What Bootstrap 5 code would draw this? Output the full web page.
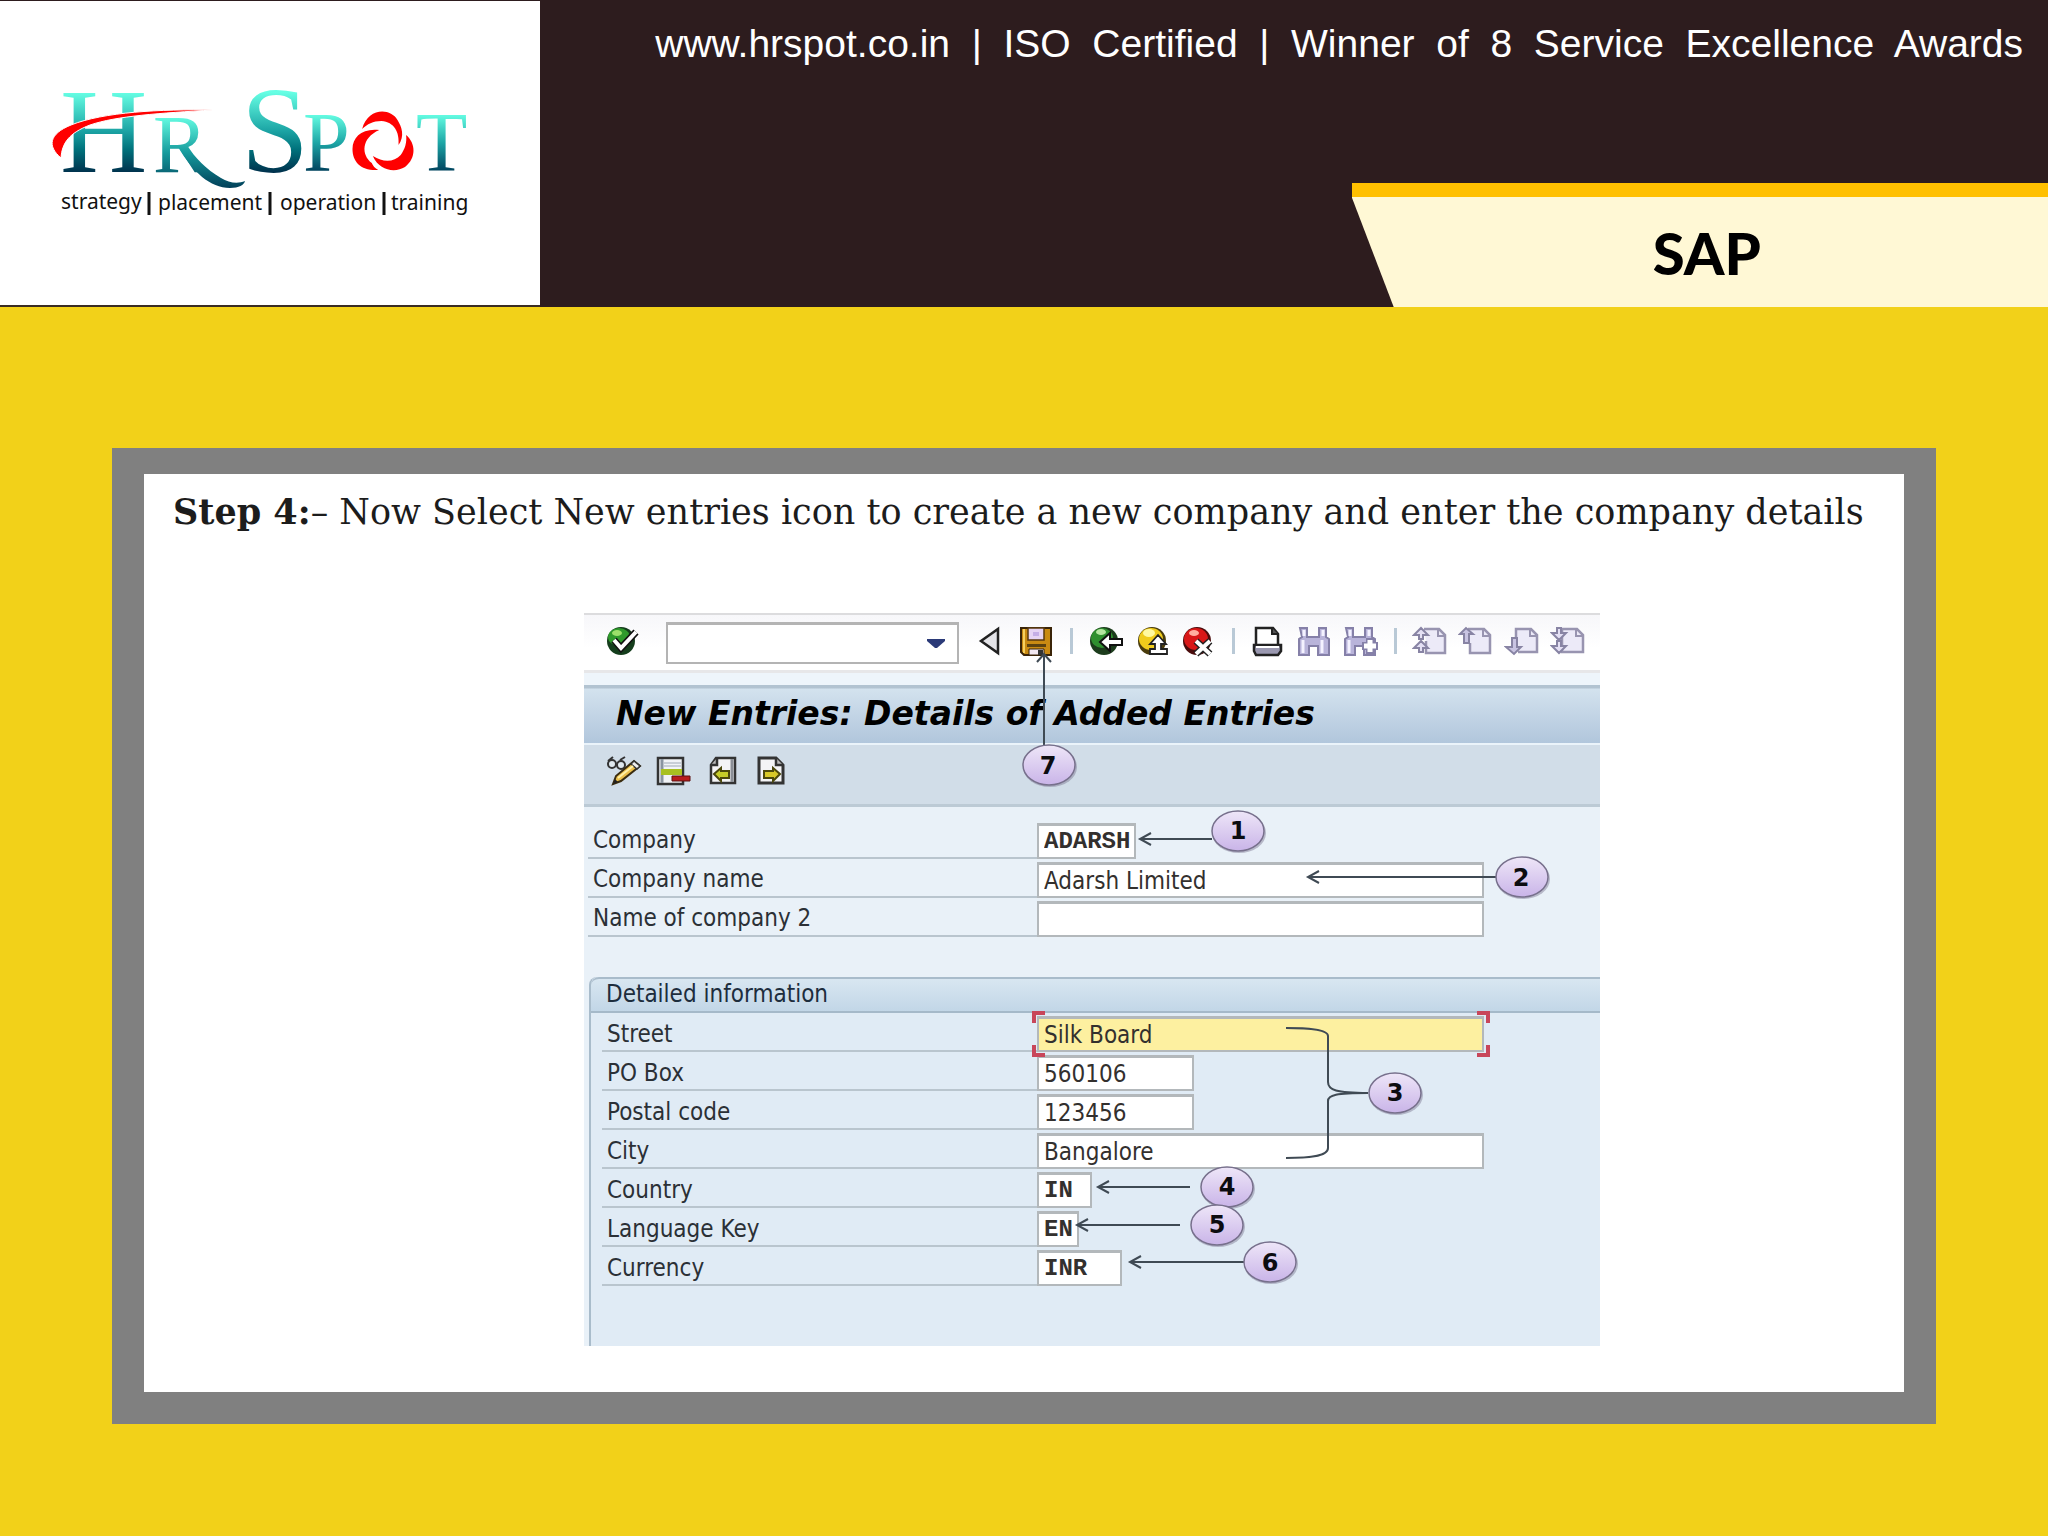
<!DOCTYPE html>
<html lang="en">
<head>
<meta charset="utf-8">
<meta name="viewport" content="width=device-width, initial-scale=1">
<title>HR Spot - SAP</title>
<link href="https://cdn.jsdelivr.net/npm/bootstrap@5.3.0/dist/css/bootstrap.min.css" rel="stylesheet">
<style>
body{background:#f2d119;color:#000;font-family:"Liberation Sans",Arial,sans-serif}
.site-head{background:#2d1c1e;min-height:307px}
.brand-box{flex:0 0 540px;background:#fff;border-top:1px solid #2d1c1e;border-bottom:2px solid #3a2c22}
.tagline{color:#fff;font-size:39px;line-height:48px;white-space:pre-wrap;padding:20px 25px 0 0}
.ribbon{width:34vw;height:124px;background:#fff8d5;border-top:14px solid #ffc000;clip-path:polygon(0 0,100% 0,100% 100%,42px 100%,0 14px)}
.ribbon h2{font:900 58px/112px Lato,Carlito,sans-serif;margin:0;padding-left:14px}
.stage{padding:141px 112px 112px}
.slide-frame{background:#fff;border:32px solid #808080;border-top-width:26px;padding:14px 29px 46px}
.step-title{font:400 35px/48px Georgia,"DejaVu Serif",serif;color:#1c1c1c;margin-bottom:77px}
.sap-wrap{padding-left:411px}
.sap-win{position:relative;width:1016px;font-family:Tahoma,"DejaVu Sans Condensed","DejaVu Sans",sans-serif;background:#e9f1f8}
.tool-row{height:60px;gap:10px;padding-left:20px;background:linear-gradient(#f7f7fa,#fff 60%);border-top:2px solid #dcdcde;border-bottom:3px solid #e7e7e9}
.ico-btn{width:36px;height:32px;padding:0;border:0;background:none;flex:none;display:block}
.ico-btn svg{display:block}
.tool-row .ico-btn,.tool-sep{margin-bottom:4px}
.tool-sep{width:14px;height:26px;flex:none;display:flex;justify-content:center}
.tool-sep::before{content:"";width:3px;background:#b9c9d6}
.cmd-box{position:relative;width:296px;flex:none}
.cmd-box select{appearance:none;width:293px;height:42px;border:2px solid #b4b4b4;border-top-width:3px;background:#fff;display:block}
.cmd-box svg{position:absolute;right:17px;top:17px;pointer-events:none}
.title-row{border-top:12px solid #eef5fb;background:linear-gradient(#b2c3d1 0 3px,#d3e2ee 4px,#b1c6dc);height:72px;border-bottom:2px solid #eaf3fa}
.title-row h3{font:italic 700 33px/58px Verdana,"DejaVu Sans",sans-serif;margin:0;padding-left:32px}
.btn-row{height:62px;gap:13px;padding:10px 0 0 22px;background:#d1dde8;border-bottom:3px solid #bccad5}
.form-main{padding:13px 0 0 4px}
.f-row{height:39px}
.f-row label{flex:0 0 449px;height:39px;line-height:41px;font-size:24px;padding-left:5px;color:#2b3036;border-bottom:2px solid #b9c5ce}
.f-group .f-row label{flex-basis:435px;line-height:43px}
.f-row input{height:36px;border:2px solid #b3b8bb;border-top-width:3px;background:#fff;padding:0 0 0 5px;font-size:24px;color:#33302e;border-radius:0}
.f-row input.code{font:700 24px "Liberation Mono",monospace}
.w-xl{width:447px}.w-md{width:157px}.w-co{width:99px}.w-in{width:55px}.w-en{width:42px}.w-cur{width:85px}
.f-group{margin:40px 0 0 1px;border-left:2px solid #a9bccb;border-top-left-radius:8px;background:#e0ebf5;padding:0 0 60px 11px}
.f-legend{margin-left:-11px;height:36px;padding-left:15px;font-size:24px;line-height:30px;color:#1d2d3d;background:linear-gradient(#d8e6f1,#c2d6e7);border-top:2px solid #a9bccb;border-bottom:2px solid #a5b9c9;border-top-left-radius:8px}
.focus-box{position:relative}
.focus-box input{background:#fdf0a0}
.focus-box svg{position:absolute;left:-5px;top:-5px;pointer-events:none}
.notes{position:absolute;left:0;top:0;pointer-events:none}
</style>
</head>
<body>
<header class="site-head d-flex">
  <div class="brand-box">
    <svg width="540" height="304" viewBox="0 1 540 304" role="img" aria-label="HR Spot">
      <defs>
        <linearGradient id="gBig" gradientUnits="userSpaceOnUse" x1="0" y1="88" x2="0" y2="173"><stop offset="0.05" stop-color="#66ffe4"/><stop offset=".5" stop-color="#1ca5a5"/><stop offset=".72" stop-color="#00727c"/><stop offset="1" stop-color="#00304c"/></linearGradient>
        <linearGradient id="gSm" gradientUnits="userSpaceOnUse" x1="0" y1="114" x2="0" y2="172"><stop offset="0" stop-color="#66ffe4"/><stop offset=".5" stop-color="#1ca5a5"/><stop offset="1" stop-color="#00405c"/></linearGradient>
        <linearGradient id="gR" gradientUnits="userSpaceOnUse" x1="0" y1="116" x2="0" y2="190"><stop offset="0" stop-color="#66ffe4"/><stop offset=".5" stop-color="#159a9c"/><stop offset="1" stop-color="#003a55"/></linearGradient>
      </defs>
      <g font-family="'Liberation Serif',serif">
        <text x="60" y="172" font-size="121" fill="url(#gBig)">H</text>
        <text x="153" y="172" font-size="82" fill="url(#gR)">R</text>
        <text x="241" y="172" font-size="122" fill="url(#gBig)">S</text>
        <text x="303" y="171" font-size="84" fill="url(#gSm)">P</text>
        <text x="416" y="171" font-size="84" fill="url(#gSm)">T</text>
      </g>
      <path d="M178 147C193 172 210 188 230 188C239 188 244 185 245 181C238 184 229 183 221 178C206 169 195 158 187 145Z" fill="url(#gR)"/>
      <path d="M61 158C47 146 49 134 71 125C103 112 161 109 213 110C161 113 116 116 90 125C69 133 62 143 61 158Z" fill="#f00" stroke="#fff" stroke-width="1"/>
      <g fill="#f00" transform="scale(1.0714 1)">
        <path d="M338 129C343 108 364 107 371 120C375 127 378 136 372 145C373 132 368 122 356 121C348 121 343 124 338 129Z"/>
        <path d="M354 130C338 128 329 137 329 149C329 162 337 171 353 170C350 168 348 166 347 163C337 155 337 138 354 130Z"/>
        <path d="M379 135C388 143 389 158 378 167C369 173 354 171 348 156C358 163 368 162 374 155C378 149 380 142 379 135Z"/>
      </g>
      <g font-family="'Noto Sans',sans-serif" font-size="21" fill="#111">
        <text x="61" y="209">strategy</text><text x="158" y="210">placement</text><text x="280" y="210">operation</text><text x="391" y="210">training</text>
      </g>
      <path d="M149 192V215M270 192V215M384 192V215" stroke="#111" stroke-width="3"/>
    </svg>
  </div>
  <div class="flex-grow-1 d-flex flex-column justify-content-between align-items-end">
    <div class="tagline">www.hrspot.co.in  |  ISO  Certified  |  Winner  of  8  Service  Excellence  Awards</div>
    <div class="ribbon text-center"><h2>SAP</h2></div>
  </div>
</header>

<main class="stage">
  <section class="slide-frame">
    <h1 class="step-title"><strong>Step 4:</strong>– Now Select New entries icon to create a new company and enter the company details</h1>
    <div class="sap-wrap">
    <div class="sap-win">
      <div class="tool-row d-flex align-items-center">
        <button class="ico-btn me-3" aria-label="Enter"><svg width="36" height="32" viewBox="0 0 36 32"><circle cx="17" cy="16" r="14" fill="#143d1c"/><ellipse cx="15" cy="12" rx="11" ry="9" fill="#2f9a2c"/><ellipse cx="13" cy="8" rx="5" ry="3" fill="#9be06a"/><path d="M10 15L17 23L32 7" fill="none" stroke="#111" stroke-width="7"/><path d="M10 15L17 23L32 7" fill="none" stroke="#fff" stroke-width="4"/></svg></button>
        <div class="cmd-box"><select aria-label="Command"><option></option></select><svg width="18" height="9" viewBox="0 0 18 9"><path d="M0 0H18V2L10 9H8L0 2Z" fill="#2b3a78"/></svg></div>
        <button class="ico-btn" aria-label="Collapse"><svg width="36" height="32" viewBox="0 0 36 32"><path d="M26 4V28L9 16Z" fill="#e4e4e8" stroke="#222" stroke-width="2.500"/></svg></button>
        <button class="ico-btn" aria-label="Save"><svg width="36" height="32" viewBox="0 0 36 32"><path d="M3 3H33V30H6L3 27Z" fill="#c98a12" stroke="#3a2408" stroke-width="2"/><path d="M6 4V28" stroke="#f6d060" stroke-width="2"/><path d="M10 3H26V15H10Z" fill="#e6d4f4" stroke="#5a3a10" stroke-width="1.500"/><path d="M15 7H21V11H15Z" fill="#c5aee6"/><path d="M9 19H28V22H9Z" fill="#5c4210"/><path d="M11 24H26V30H11Z" fill="#f2e8f2" stroke="#3a2408"/><path d="M20 25H25V30H20Z" fill="#333"/></svg></button>
        <span class="tool-sep"></span>
        <button class="ico-btn" aria-label="Back"><svg width="36" height="32" viewBox="0 0 36 32"><circle cx="16" cy="16" r="14" fill="#1c3c1c"/><ellipse cx="14" cy="13" rx="11" ry="10" fill="#2f8f2f"/><ellipse cx="13" cy="7" rx="5" ry="3" fill="#b4e6a0"/><path d="M12 17L22 8V14H34V20H22V26Z" fill="#fff" stroke="#111" stroke-width="2"/></svg></button>
        <button class="ico-btn" aria-label="Exit"><svg width="36" height="32" viewBox="0 0 36 32"><circle cx="18" cy="16" r="14" fill="#4a3c0c"/><ellipse cx="17" cy="14" rx="12" ry="11" fill="#f0cc1c"/><ellipse cx="15" cy="8" rx="6" ry="4" fill="#fff9a0"/><path d="M24 10L32 19H27V24H33V29H16V24H21V19H16Z" fill="#fff" stroke="#222" stroke-width="1.800"/></svg></button>
        <button class="ico-btn" aria-label="Cancel"><svg width="36" height="32" viewBox="0 0 36 32"><circle cx="17" cy="16" r="14" fill="#4a0c0c"/><ellipse cx="16" cy="14" rx="12" ry="11" fill="#d81818"/><ellipse cx="14" cy="8" rx="5" ry="3" fill="#ffb0a0"/><path d="M16 16L30 29M30 16L16 29" stroke="#222" stroke-width="7"/><path d="M16 16L30 29M30 16L16 29" stroke="#fff" stroke-width="4"/></svg></button>
        <span class="tool-sep"></span>
        <button class="ico-btn" aria-label="Print"><svg width="36" height="32" viewBox="0 0 36 32"><path d="M6 20V3H23L28 9V20" fill="#fff" stroke="#222" stroke-width="2.500"/><path d="M22 3V9H28" fill="#555" stroke="#222" stroke-width="2"/><path d="M4 20H31V26L28 30H6L4 26Z" fill="#9a98b0" stroke="#222" stroke-width="2.500"/><path d="M6 22H29" stroke="#fff" stroke-width="2"/></svg></button>
        <button class="ico-btn" aria-label="Find"><svg width="36" height="32" viewBox="0 0 36 32"><path d="M4 3H11V12H23V3H30V12L33 14V30H22V21H13V30H3V14L6 12Z" fill="#b9b4da" stroke="#8580a8" stroke-width="2"/><path d="M8 5V11M27 5V11M7 15V28M26 15V28" stroke="#f4f2ff" stroke-width="3"/></svg></button>
        <button class="ico-btn" aria-label="Find next"><svg width="36" height="32" viewBox="0 0 36 32"><path d="M4 3H11V12H23V3H30V12L33 14V30H22V21H13V30H3V14L6 12Z" fill="#b9b4da" stroke="#8580a8" stroke-width="2"/><path d="M8 5V11M27 5V11M7 15V28" stroke="#f4f2ff" stroke-width="3"/><path d="M28 13V29M20 21H36" stroke="#8580a8" stroke-width="8"/><path d="M28 15V27M22 21H34" stroke="#fff" stroke-width="5"/></svg></button>
        <span class="tool-sep"></span>
        <button class="ico-btn" aria-label="First page"><svg width="36" height="32" viewBox="0 0 36 32"><path d="M12 4H27L33 10V28H14V16" fill="#eceaf8" stroke="#9894b0" stroke-width="2.500"/><path d="M26 4V11H33" fill="none" stroke="#9894b0" stroke-width="2"/><path d="M2 10L9 3L16 10H11V14H7V10ZM2 23L9 16L16 23H11V27H7V23Z" fill="#e4e0f4" stroke="#8884a4" stroke-width="2"/></svg></button>
        <button class="ico-btn" aria-label="Previous page"><svg width="36" height="32" viewBox="0 0 36 32"><path d="M10 4H26L32 10V28H12V18" fill="#eceaf8" stroke="#9894b0" stroke-width="2.500"/><path d="M25 4V11H32" fill="none" stroke="#9894b0" stroke-width="2"/><path d="M2 9L8 3L15 9H11V18H6V9Z" fill="#c9c4e2" stroke="#8884a4" stroke-width="2"/></svg></button>
        <button class="ico-btn" aria-label="Next page"><svg width="36" height="32" viewBox="0 0 36 32"><path d="M12 16V4H27L33 10V27H14" fill="#eceaf8" stroke="#9894b0" stroke-width="2.500"/><path d="M26 4V11H33" fill="none" stroke="#9894b0" stroke-width="2"/><path d="M8 13H13V22H17L10 29L2 22H8Z" fill="#c9c4e2" stroke="#8884a4" stroke-width="2"/></svg></button>
        <button class="ico-btn" aria-label="Last page"><svg width="36" height="32" viewBox="0 0 36 32"><path d="M12 4H27L33 10V27H12Z" fill="#eceaf8" stroke="#9894b0" stroke-width="2.500"/><path d="M26 4V11H33" fill="none" stroke="#9894b0" stroke-width="2"/><path d="M7 3H11V8H16L9 15L2 8H7ZM7 16H11V21H16L9 28L2 21H7Z" fill="#e4e0f4" stroke="#8884a4" stroke-width="2"/></svg></button>
      </div>
      <div class="title-row"><h3>New Entries: Details of Added Entries</h3></div>
      <div class="btn-row d-flex">
        <button class="ico-btn" aria-label="Display or change"><svg width="36" height="32" viewBox="0 0 36 32"><path d="M2 6L7 2M14 5L19 2" stroke="#333" stroke-width="2"/><circle cx="6" cy="9" r="4" fill="#dfe8ee" stroke="#333" stroke-width="2"/><circle cx="15" cy="10" r="4" fill="#dfe8ee" stroke="#333" stroke-width="2"/><path d="M7 29L10 21L28 6L34 11L15 26Z" fill="#ecc04c" stroke="#3a2c10" stroke-width="2"/><path d="M28 6L34 11L31 14L25 9Z" fill="#eee" stroke="#333" stroke-width="1.500"/><path d="M12 23L27 11" stroke="#fff0a8" stroke-width="2"/><path d="M7 29L9 24L12 27Z" fill="#222"/></svg></button>
        <button class="ico-btn" aria-label="Delete"><svg width="36" height="32" viewBox="0 0 36 32"><path d="M3 3H28V29H3Z" fill="#f1f3f6" stroke="#333" stroke-width="2.500"/><path d="M7 4V28" stroke="#8a94a0" stroke-width="3"/><path d="M9 8H26M9 11H26" stroke="#c8ced6" stroke-width="2"/><path d="M6 14H27V20H6Z" fill="#a8c020"/><path d="M17 21H35V26H17Z" fill="#b81c1c" stroke="#5c1010"/></svg></button>
        <button class="ico-btn" aria-label="Previous entry"><svg width="36" height="32" viewBox="0 0 36 32"><path d="M12 3H31V28H7V10Z" fill="#f4f4f6" stroke="#333" stroke-width="2.500"/><path d="M28 4V27" stroke="#8a8e96" stroke-width="3"/><path d="M13 3V10H7" fill="#bbb" stroke="#333" stroke-width="2.500"/><path d="M10 19L17 13V16H25V23H17V26Z" fill="#c6cc28" stroke="#4c480c" stroke-width="2"/></svg></button>
        <button class="ico-btn" aria-label="Next entry"><svg width="36" height="32" viewBox="0 0 36 32"><path d="M6 3H23L30 10V28H6Z" fill="#f4f4f6" stroke="#333" stroke-width="3"/><path d="M23 3V10H30" fill="#bbb" stroke="#333" stroke-width="2.500"/><path d="M27 19L20 13V16H11V23H20V26Z" fill="#d8c828" stroke="#4c480c" stroke-width="2"/></svg></button>
      </div>
      <form class="form-main">
        <div class="f-row d-flex align-items-end"><label for="co">Company</label><input id="co" class="code w-co" value="ADARSH"></div>
        <div class="f-row d-flex align-items-end"><label for="cn">Company name</label><input id="cn" class="w-xl" value="Adarsh Limited"></div>
        <div class="f-row d-flex align-items-end"><label for="cn2">Name of company 2</label><input id="cn2" class="w-xl"></div>
        <div class="f-group">
          <div class="f-legend">Detailed information</div>
          <div class="f-row d-flex align-items-end"><label for="st">Street</label><div class="focus-box d-flex"><input id="st" class="w-xl" value="Silk Board"><svg width="458" height="46" viewBox="0 0 458 46" fill="none" stroke="#c8465a" stroke-width="4"><path d="M2 12V2H13M445 2H456V12M456 34V44H445M13 44H2V34"/></svg></div></div>
          <div class="f-row d-flex align-items-end"><label for="po">PO Box</label><input id="po" class="w-md" value="560106"></div>
          <div class="f-row d-flex align-items-end"><label for="pc">Postal code</label><input id="pc" class="w-md" value="123456"></div>
          <div class="f-row d-flex align-items-end"><label for="ci">City</label><input id="ci" class="w-xl" value="Bangalore"></div>
          <div class="f-row d-flex align-items-end"><label for="ct">Country</label><input id="ct" class="code w-in" value="IN"></div>
          <div class="f-row d-flex align-items-end"><label for="lk">Language Key</label><input id="lk" class="code w-en" value="EN"></div>
          <div class="f-row d-flex align-items-end"><label for="cu">Currency</label><input id="cu" class="code w-cur" value="INR"></div>
        </div>
      </form>
      <svg class="notes" width="1016" height="734" viewBox="584 613 1016 734">
        <defs>
          <linearGradient id="gNote" x1="0" y1="0" x2="0" y2="1"><stop offset="0" stop-color="#eee6f8"/><stop offset="1" stop-color="#c9b4e8"/></linearGradient>
          <g id="bub"><ellipse cx="1" cy="2" rx="27" ry="20" fill="#7a7690" opacity=".45"/><ellipse rx="26" ry="20" fill="url(#gNote)" stroke="#77708c" stroke-width="1.500"/></g>
        </defs>
        <g fill="none" stroke="#3f4a54" stroke-width="2">
          <path d="M1212 839H1140M1151 833L1140 839L1151 845"/>
          <path d="M1496 877H1308M1319 871L1308 877L1319 883"/>
          <path d="M1286 1028C1306 1028 1328 1029 1328 1036V1082C1328 1090 1336 1093 1368 1093M1368 1093C1336 1093 1328 1095 1328 1101V1148C1328 1157 1306 1158 1286 1158"/>
          <path d="M1190 1187H1098M1109 1181L1098 1187L1109 1193"/>
          <path d="M1180 1225H1077M1088 1219L1077 1225L1088 1231"/>
          <path d="M1244 1262H1130M1141 1256L1130 1262L1141 1268"/>
          <path d="M1044 746V654M1037 662L1044 654L1051 662"/>
        </g>
        <use href="#bub" x="1238" y="831"/><use href="#bub" x="1522" y="877"/><use href="#bub" x="1395" y="1093"/><use href="#bub" x="1227" y="1187"/><use href="#bub" x="1217" y="1225"/><use href="#bub" x="1270" y="1262"/><use href="#bub" x="1049" y="765"/>
        <g font-family="'DejaVu Sans',sans-serif" font-size="24" font-weight="700" text-anchor="middle" fill="#0c0c10">
          <text x="1238" y="839">1</text><text x="1521" y="886">2</text><text x="1395" y="1101">3</text><text x="1227" y="1195">4</text><text x="1217" y="1233">5</text><text x="1270" y="1271">6</text><text x="1048" y="774">7</text>
        </g>
      </svg>
    </div>
    </div>
  </section>
</main>
<script src="https://cdn.jsdelivr.net/npm/bootstrap@5.3.0/dist/js/bootstrap.bundle.min.js"></script>
</body>
</html>
